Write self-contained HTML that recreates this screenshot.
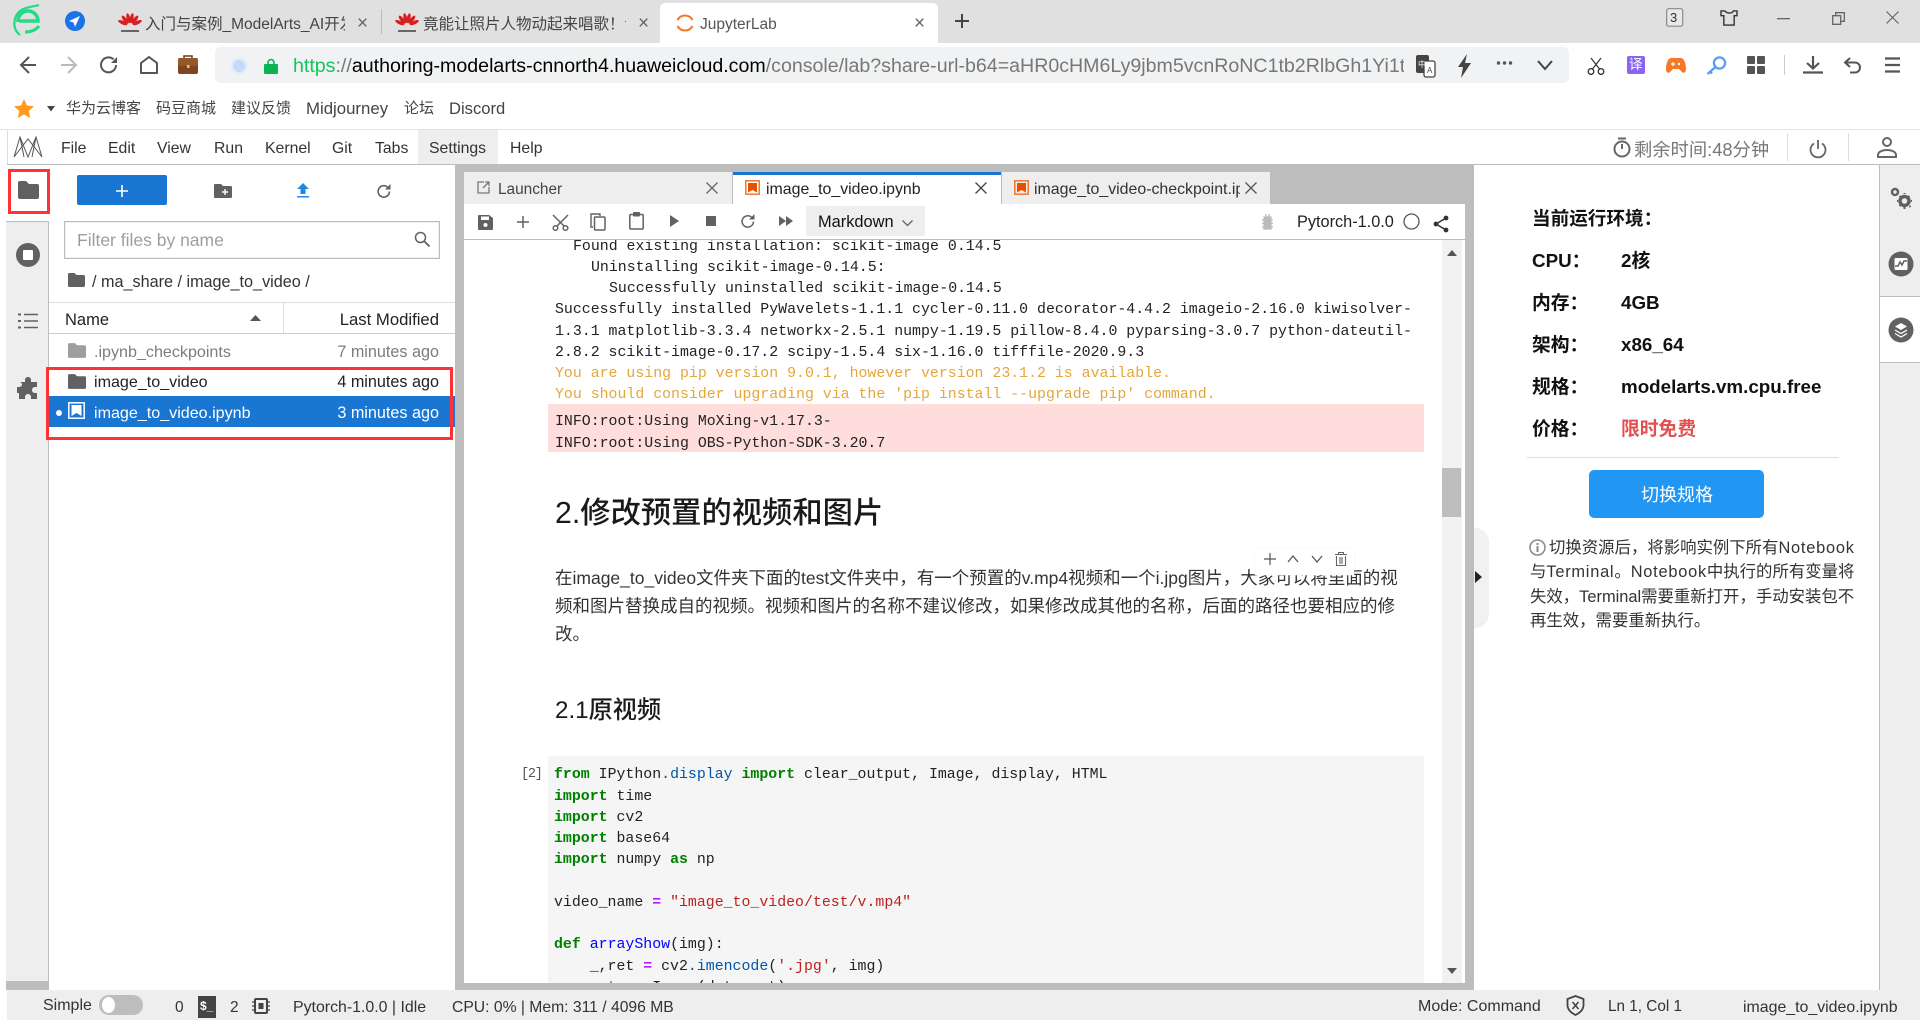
<!DOCTYPE html>
<html lang="zh"><head><meta charset="utf-8"><title>JupyterLab</title>
<style>
html,body{margin:0;padding:0;width:1920px;height:1020px;overflow:hidden;background:#fff}
body{position:relative;font-family:"Liberation Sans","Noto Sans CJK SC",sans-serif;color:#222}
.t{position:absolute;white-space:pre;line-height:24px;margin-top:-12px;font-size:16px}
.b{position:absolute}
svg{position:absolute;overflow:visible}
.m{font-family:"Liberation Mono","Noto Sans CJK SC",monospace;font-size:14.88px;color:#222}
.o{color:#e5a63a}
.k{color:#008000;font-weight:bold}.q{color:#ba2121}.p{color:#aa22ff;font-weight:bold}.f{color:#0000ff}.n{color:#0055aa}
.s{letter-spacing:.75px}
</style></head><body>

<!-- browser tab strip -->
<div class="b" style="left:0;top:0;width:1920px;height:43px;background:#e0e0e0"></div>
<div class="b" style="left:660px;top:3px;width:278px;height:40px;background:#fff;border-radius:5px 5px 0 0"></div>
<div class="b" style="left:381px;top:9px;width:1px;height:25px;background:#bbb"></div>
<svg style="left:14px;top:5px" width="28" height="31" viewBox="0 0 28 31"><path d="M4 17a10 10 0 0 1 20-2v1H5" fill="none" stroke="#1fdc85" stroke-width="3.500"/><path d="M25 21c-3 4-8 6-14 6" fill="none" stroke="#1fdc85" stroke-width="3"/><path d="M6 30C-2 24-1 12 6 6 11 2 18 2 25 0" fill="none" stroke="#1fdc85" stroke-width="2.200"/></svg>
<svg style="left:65px;top:11px" width="20" height="20" viewBox="0 0 20 20"><circle cx="10" cy="10" r="10" fill="#1a73e8"/><path d="M15 5L4 10l4.500 1.500L10 16z" fill="#fff"/></svg>
<svg style="left:120px;top:13px" width="20" height="20" viewBox="0 0 20 20"><g fill="#d81e20"><ellipse cx="10" cy="5" rx="1.800" ry="5" transform="rotate(-12 10 13)"/><ellipse cx="10" cy="5" rx="1.800" ry="5" transform="rotate(12 10 13)"/><ellipse cx="10" cy="5" rx="1.800" ry="5" transform="rotate(-38 10 13)"/><ellipse cx="10" cy="5" rx="1.800" ry="5" transform="rotate(38 10 13)"/><ellipse cx="10" cy="5" rx="1.800" ry="5" transform="rotate(-65 10 13)"/><ellipse cx="10" cy="5" rx="1.800" ry="5" transform="rotate(65 10 13)"/></g><rect x="1" y="17" width="18" height="2" fill="#666"/></svg>
<div class="t" style="left:145px;top:25px;font-size:15.500px;color:#444;width:200px;overflow:hidden;height:24px">入门与案例_ModelArts_AI开发</div>
<div class="t" style="left:357px;top:24px;font-size:19px;color:#666">×</div>
<svg style="left:397px;top:13px" width="20" height="20" viewBox="0 0 20 20"><g fill="#d81e20"><ellipse cx="10" cy="5" rx="1.800" ry="5" transform="rotate(-12 10 13)"/><ellipse cx="10" cy="5" rx="1.800" ry="5" transform="rotate(12 10 13)"/><ellipse cx="10" cy="5" rx="1.800" ry="5" transform="rotate(-38 10 13)"/><ellipse cx="10" cy="5" rx="1.800" ry="5" transform="rotate(38 10 13)"/><ellipse cx="10" cy="5" rx="1.800" ry="5" transform="rotate(-65 10 13)"/><ellipse cx="10" cy="5" rx="1.800" ry="5" transform="rotate(65 10 13)"/></g><rect x="1" y="17" width="18" height="2" fill="#666"/></svg>
<div class="t" style="left:423px;top:25px;font-size:15.500px;color:#444;width:203px;overflow:hidden;height:24px">竟能让照片人物动起来唱歌！说</div>
<div class="t" style="left:638px;top:24px;font-size:19px;color:#666">×</div>
<svg style="left:675px;top:13px" width="20" height="20" viewBox="0 0 20 20"><path d="M2.500 7a8.500 8.500 0 0 1 15 0M2.500 13a8.500 8.500 0 0 0 15 0" fill="none" stroke="#f37626" stroke-width="2"/></svg>
<div class="t" style="left:700px;top:25px;font-size:15.500px;color:#555">JupyterLab</div>
<div class="t" style="left:914px;top:24px;font-size:19px;color:#666">×</div>
<svg style="left:954px;top:13px" width="16" height="16" viewBox="0 0 16 16"><path d="M8 1v14M1 8h14" stroke="#444" stroke-width="2"/></svg>
<!-- window controls -->
<svg style="left:1666px;top:8px" width="18" height="19" viewBox="0 0 18 19"><rect x=".7" y=".7" width="16" height="17.500" rx="2" fill="#e8e8e8" stroke="#888" stroke-width="1.200"/></svg>
<div class="t" style="left:1670px;top:18px;font-size:13px;color:#333">3</div>
<svg style="left:1720px;top:10px" width="18" height="16" viewBox="0 0 19 17"><path d="M5 1H1L1 6h3v10h11V6h3V1h-4c-1 3-6 3-9 0z" fill="none" stroke="#333" stroke-width="1.500"/></svg>
<svg style="left:1777px;top:18px" width="13" height="2"><rect width="13" height="1.300" fill="#666"/></svg>
<svg style="left:1832px;top:12px" width="13" height="13" viewBox="0 0 13 13"><path d="M.7 3.700h8v8.600h-8zM3.700 3.700V.7h8.600v8.600H8.700" fill="none" stroke="#666" stroke-width="1.300"/></svg>
<svg style="left:1886px;top:11px" width="13" height="13" viewBox="0 0 13 13"><path d="M.5.5l12 12M12.500.5l-12 12" stroke="#666" stroke-width="1.200"/></svg>

<!-- nav row -->
<svg style="left:19px;top:55px" width="18" height="20" viewBox="0 0 18 20"><path d="M17 10H2M10 2l-8 8 8 8" fill="none" stroke="#555" stroke-width="2"/></svg>
<svg style="left:60px;top:55px" width="18" height="20" viewBox="0 0 18 20"><path d="M1 10h15M8 2l8 8-8 8" fill="none" stroke="#bbb" stroke-width="2"/></svg>
<svg style="left:100px;top:56px" width="18" height="18" viewBox="0 0 18 18"><path d="M16 9a7.500 7.500 0 1 1-2.500-5.700" fill="none" stroke="#555" stroke-width="2"/><path d="M17 1v6h-6z" fill="#555"/></svg>
<svg style="left:140px;top:56px" width="18" height="18" viewBox="0 0 18 18"><path d="M1 7l8-6 8 6v10H1z" fill="none" stroke="#555" stroke-width="2" stroke-linejoin="round"/></svg>
<svg style="left:178px;top:54px" width="20" height="20" viewBox="0 0 20 20"><path d="M6 4V2h8v2" fill="none" stroke="#6d3a1c" stroke-width="1.500"/><rect x="0" y="4" width="20" height="16" rx="2" fill="#7d4520"/><rect x="0" y="4" width="20" height="8" rx="2" fill="#95582c"/><rect x="9" y="11" width="2.500" height="3" fill="#e8c860"/></svg>
<div class="b" style="left:215px;top:47px;width:1354px;height:36px;background:#f1f2f3;border-radius:6px"></div>
<svg style="left:230px;top:57px" width="18" height="18" viewBox="0 0 18 18"><circle cx="9" cy="9" r="8.500" fill="#e3ecfa"/><circle cx="9" cy="9" r="6" fill="#c5daf8"/></svg>
<svg style="left:264px;top:58px" width="14" height="16" viewBox="0 0 14 16"><path d="M4 7V4.500a3 3 0 0 1 6 0V7" fill="none" stroke="#0bb353" stroke-width="1.600"/><rect y="6" width="14" height="10" rx="1" fill="#0bb353"/></svg>
<div style="position:absolute;left:293px;top:53px;width:1111px;height:26px;overflow:hidden;white-space:nowrap;font-size:19.600px;line-height:26px;color:#777"><span style="color:#11c75a">https</span>://<span style="color:#000">authoring-modelarts-cnnorth4.huaweicloud.com</span>/console/lab?share-url-b64=aHR0cHM6Ly9jbm5vcnRoNC1tb2RlbGh1Yi1tb2F</div>
<svg style="left:1415px;top:54px" width="21" height="24" viewBox="0 0 21 24"><rect x="1" y="1" width="13" height="18" rx="2" fill="#444"/><rect x="9" y="7" width="11" height="16" rx="2" fill="#fff" stroke="#444" stroke-width="1.300"/><text x="3" y="13" font-size="8" fill="#fff" font-family="Noto Sans CJK SC">中</text><text x="12" y="19" font-size="8" fill="#444">A</text></svg>
<svg style="left:1457px;top:54px" width="15" height="24" viewBox="0 0 15 24"><path d="M10 0L1 13h5l-2 11 10-15H8z" fill="#444"/></svg>
<svg style="left:1496px;top:60px" width="17" height="6"><circle cx="2.500" cy="3" r="1.700" fill="#555"/><circle cx="8.500" cy="3" r="1.700" fill="#555"/><circle cx="14.500" cy="3" r="1.700" fill="#555"/></svg>
<svg style="left:1537px;top:60px" width="16" height="11" viewBox="0 0 16 11"><path d="M1 1l7 8 7-8" fill="none" stroke="#444" stroke-width="2"/></svg>
<svg style="left:1587px;top:57px" width="18" height="18" viewBox="0 0 18 18"><path d="M4 1l8.500 11M14 1L5.500 12" stroke="#333" stroke-width="1.200"/><circle cx="4" cy="14.500" r="2.800" fill="none" stroke="#333" stroke-width="1.300"/><circle cx="14" cy="14.500" r="2.800" fill="none" stroke="#333" stroke-width="1.300"/></svg>
<div class="b" style="left:1627px;top:56px;width:18px;height:18px;background:#8b64f4;border-radius:2px"></div>
<div class="t" style="left:1629px;top:65px;font-size:13.500px;color:#fff">译</div>
<svg style="left:1666px;top:57px" width="20" height="17" viewBox="0 0 20 17"><path d="M5 1h10c3 0 5 6 5 11 0 4-3 5-5 2l-2-2H7l-2 2c-2 3-5 2-5-2C0 7 2 1 5 1z" fill="#f7782a"/><path d="M5 7h4M7 5v4" stroke="#fff" stroke-width="1.300"/><circle cx="13" cy="7" r="1.200" fill="#fff"/></svg>
<svg style="left:1706px;top:56px" width="21" height="19" viewBox="0 0 21 19"><circle cx="13.500" cy="7" r="5.600" fill="none" stroke="#5b9cf5" stroke-width="2.300"/><path d="M9.500 11L1.500 18M4 15.500l2 2" stroke="#5b9cf5" stroke-width="2.300" fill="none"/></svg>
<svg style="left:1747px;top:56px" width="18" height="18" viewBox="0 0 18 18"><rect width="8" height="8" rx="1" fill="#555"/><rect x="10" width="8" height="8" rx="1" fill="#555"/><rect y="10" width="8" height="8" rx="1" fill="#555"/><rect x="10" y="10" width="8" height="8" rx="1" fill="#555"/></svg>
<div class="b" style="left:1784px;top:55px;width:1px;height:20px;background:#ccc"></div>
<svg style="left:1803px;top:56px" width="20" height="18" viewBox="0 0 20 18"><path d="M10 0v12M4 7l6 5.500L16 7M0 16.500h20" fill="none" stroke="#555" stroke-width="2.200"/></svg>
<svg style="left:1844px;top:57px" width="18" height="17" viewBox="0 0 18 17"><path d="M6 1L1 5.500 6 10M1 5.500h10a5 5 0 0 1 0 10H6" fill="none" stroke="#555" stroke-width="2"/></svg>
<svg style="left:1885px;top:57px" width="15" height="16" viewBox="0 0 15 16"><path d="M0 1.500h15M0 8h15M0 14.500h15" stroke="#555" stroke-width="2.200"/></svg>

<!-- bookmarks -->
<svg style="left:14px;top:99px" width="20" height="19" viewBox="0 0 20 19"><path d="M10 0l3 6.500 7 .8-5.200 4.700 1.400 7L10 15.400 3.800 19l1.400-7L0 7.300l7-.8z" fill="#ff9a1f"/></svg>
<svg style="left:47px;top:106px" width="9" height="6"><path d="M0 0h8L4 5.500z" fill="#444"/></svg>
<div class="t" style="left:66px;top:109px;font-size:15px;color:#444">华为云博客</div>
<div class="t" style="left:156px;top:109px;font-size:15px;color:#444">码豆商城</div>
<div class="t" style="left:231px;top:109px;font-size:15px;color:#444">建议反馈</div>
<div class="t" style="left:306px;top:109px;font-size:16.800px;color:#444">Midjourney</div>
<div class="t" style="left:404px;top:109px;font-size:15px;color:#444">论坛</div>
<div class="t" style="left:449px;top:109px;font-size:16.600px;color:#444">Discord</div>
<div class="b" style="left:0;top:129px;width:1920px;height:1px;background:#e3e3e3"></div>

<!-- jupyter menu -->
<div class="b" style="left:7px;top:130px;width:1px;height:35px;background:#ddd"></div>
<svg style="left:13px;top:136px" width="30" height="22" viewBox="0 0 30 22"><path d="M1 21L7 1l8 20L23 1l6 20M1 21L15 3l14 18M7 1l4 20M23 1l-4 20" fill="none" stroke="#555" stroke-width="1"/></svg>
<div class="b" style="left:418px;top:130px;width:80px;height:34px;background:#eee"></div>
<div class="t" style="left:61px;top:149px;font-size:15.800px;color:#333">File</div>
<div class="t" style="left:108px;top:149px;font-size:15.800px;color:#333">Edit</div>
<div class="t" style="left:157px;top:149px;font-size:15.800px;color:#333">View</div>
<div class="t" style="left:214px;top:149px;font-size:15.800px;color:#333">Run</div>
<div class="t" style="left:265px;top:149px;font-size:15.800px;color:#333">Kernel</div>
<div class="t" style="left:332px;top:149px;font-size:15.800px;color:#333">Git</div>
<div class="t" style="left:375px;top:149px;font-size:15.800px;color:#333">Tabs</div>
<div class="t" style="left:429px;top:149px;font-size:15.800px;color:#333">Settings</div>
<div class="t" style="left:510px;top:149px;font-size:15.800px;color:#333">Help</div>
<svg style="left:1613px;top:137px" width="18" height="21" viewBox="0 0 18 21"><circle cx="9" cy="12" r="7.500" fill="none" stroke="#666" stroke-width="2"/><path d="M5 1.500h8M9 7v5" stroke="#666" stroke-width="2"/></svg>
<div class="t" style="left:1634px;top:150px;font-size:18.300px;color:#777">剩余时间:48分钟</div>
<div class="b" style="left:1787px;top:133px;width:1px;height:28px;background:#ddd"></div>
<div class="b" style="left:1848px;top:133px;width:1px;height:28px;background:#ddd"></div>
<svg style="left:1809px;top:140px" width="18" height="18" viewBox="0 0 18 18"><path d="M5 3.500a7.500 7.500 0 1 0 8 0M9 0v9" fill="none" stroke="#666" stroke-width="1.800"/></svg>
<svg style="left:1876px;top:137px" width="22" height="21" viewBox="0 0 22 21"><circle cx="11" cy="5" r="4" fill="none" stroke="#666" stroke-width="2"/><path d="M2 20v-2c0-3 4-5 9-5s9 2 9 5v2z" fill="none" stroke="#666" stroke-width="2"/></svg>
<div class="b" style="left:7px;top:164px;width:1913px;height:1px;background:#bdbdbd"></div>

<!-- left sidebar -->
<div class="b" style="left:6px;top:221px;width:42px;height:769px;background:#eee;border-right:1px solid #bdbdbd;border-top:1px solid #bdbdbd"></div>
<svg style="left:18px;top:181px" width="21" height="18" viewBox="0 0 21 18"><path d="M2 0h6l3 3h8a2 2 0 0 1 2 2v11a2 2 0 0 1-2 2H2a2 2 0 0 1-2-2V2a2 2 0 0 1 2-2z" fill="#616161"/></svg>
<svg style="left:16px;top:243px" width="24" height="24" viewBox="0 0 24 24"><circle cx="12" cy="12" r="12" fill="#616161"/><rect x="7" y="7" width="10" height="10" rx="1" fill="#fff"/></svg>
<svg style="left:18px;top:313px" width="20" height="16" viewBox="0 0 20 16"><path d="M6 1.500h14M6 8h14M6 14.500h14" stroke="#616161" stroke-width="1.500"/><path d="M0 1.500h3M0 8h3M0 14.500h3" stroke="#616161" stroke-width="2"/></svg>
<svg style="left:17px;top:377px" width="23" height="23" viewBox="0 0 23 23"><path d="M8 3c0-4 6-4 6 0v2h6v5h-2c-4 0-4 6 0 6h2v6h-6v-2c0-4-6-4-6 0v2H2v-6h-2c0 0 0 0 0 0v-6h2C6 10 6 5 2 5h6z" fill="#616161"/></svg>
<div class="b" style="left:8px;top:169px;width:36px;height:39px;border:3px solid #ff3333"></div>

<!-- file browser -->
<div class="b" style="left:77px;top:175px;width:90px;height:30px;background:#1976d2;border-radius:2px"></div>
<svg style="left:116px;top:185px" width="12" height="12"><path d="M6 0v12M0 6h12" stroke="#fff" stroke-width="1.600"/></svg>
<svg style="left:214px;top:184px" width="18" height="14" viewBox="0 0 18 14"><path d="M1 0h6l2 2h8a1 1 0 0 1 1 1v10a1 1 0 0 1-1 1H1a1 1 0 0 1-1-1V1a1 1 0 0 1 1-1z" fill="#616161"/><path d="M11 5v6M8 8h6" stroke="#fff" stroke-width="1.400"/></svg>
<svg style="left:297px;top:183px" width="12" height="15" viewBox="0 0 12 15"><path d="M6 0l6 6H8.500v5h-5V6H0z" fill="#1e88e5"/><rect y="13" width="12" height="1.500" fill="#1e88e5"/></svg>
<svg style="left:377px;top:184px" width="14" height="14" viewBox="0 0 14 14"><path d="M12.500 7.500a5.700 5.700 0 1 1-2-4.400" fill="none" stroke="#616161" stroke-width="1.600"/><path d="M13.500 0v5.500H8z" fill="#616161"/></svg>
<div class="b" style="left:64px;top:221px;width:374px;height:36px;border:1px solid #bdbdbd;box-shadow:inset 0 0 0 .5px #ddd"></div>
<div class="t" style="left:77px;top:240px;font-size:17.500px;color:#9e9e9e">Filter files by name</div>
<svg style="left:414px;top:231px" width="16" height="16" viewBox="0 0 16 16"><circle cx="6.500" cy="6.500" r="5" fill="none" stroke="#616161" stroke-width="1.500"/><path d="M10.500 10.500l5 5" stroke="#616161" stroke-width="1.800"/></svg>
<svg style="left:68px;top:273px" width="17" height="14" viewBox="0 0 17 14"><path d="M1.500 0h5l2 2h7A1.500 1.500 0 0 1 17 3.500v9a1.500 1.500 0 0 1-1.500 1.500h-14A1.500 1.500 0 0 1 0 12.500v-11A1.500 1.500 0 0 1 1.500 0z" fill="#616161"/></svg>
<div class="t" style="left:92px;top:282px;font-size:16.200px;color:#333">/ ma_share / image_to_video /</div>
<div class="b" style="left:49px;top:302px;width:406px;height:1px;background:#ddd"></div>
<div class="b" style="left:49px;top:333px;width:406px;height:1px;background:#ccc"></div>
<div class="b" style="left:283px;top:303px;width:1px;height:30px;background:#ddd"></div>
<div class="t" style="left:65px;top:320px;font-size:16.500px;color:#222">Name</div>
<svg style="left:250px;top:315px" width="11" height="6"><path d="M5.500 0L11 6H0z" fill="#555"/></svg>
<div class="t" style="right:1481px;top:320px;font-size:16.700px;color:#222">Last Modified</div>
<svg style="left:68px;top:343px" width="18" height="15" viewBox="0 0 17 14"><path d="M1.500 0h5l2 2h7A1.500 1.500 0 0 1 17 3.500v9a1.500 1.500 0 0 1-1.500 1.500h-14A1.500 1.500 0 0 1 0 12.500v-11A1.500 1.500 0 0 1 1.500 0z" fill="#9e9e9e"/></svg>
<div class="t" style="left:94px;top:352px;font-size:16.100px;color:#7d7d7d">.ipynb_checkpoints</div>
<div class="t" style="right:1481px;top:352px;font-size:16.200px;color:#7d7d7d">7 minutes ago</div>
<svg style="left:68px;top:374px" width="18" height="15" viewBox="0 0 17 14"><path d="M1.500 0h5l2 2h7A1.500 1.500 0 0 1 17 3.500v9a1.500 1.500 0 0 1-1.500 1.500h-14A1.500 1.500 0 0 1 0 12.500v-11A1.500 1.500 0 0 1 1.500 0z" fill="#616161"/></svg>
<div class="t" style="left:94px;top:382px;font-size:16.100px;color:#222">image_to_video</div>
<div class="t" style="right:1481px;top:382px;font-size:16.200px;color:#222">4 minutes ago</div>
<div class="b" style="left:49px;top:396px;width:406px;height:31px;background:#1976d2"></div>
<div class="b" style="left:56px;top:410px;width:6px;height:6px;border-radius:50%;background:#fff"></div>
<svg style="left:68px;top:402px" width="18" height="18" viewBox="0 0 18 18"><rect x=".8" y=".8" width="15.400" height="15.400" fill="none" stroke="#fff" stroke-width="1.500"/><path d="M3.500 3h10v11L8.500 11 3.500 14z" fill="#fff"/></svg>
<div class="t" style="left:94px;top:413px;font-size:16.100px;color:#fff">image_to_video.ipynb</div>
<div class="t" style="right:1481px;top:413px;font-size:16.200px;color:#fff">3 minutes ago</div>
<div class="b" style="left:46px;top:367px;width:401px;height:67px;border:3px solid #ff3333"></div>

<!-- splitters -->
<div class="b" style="left:455px;top:165px;width:9px;height:825px;background:#bdbdbd"></div>
<div class="b" style="left:6px;top:981px;width:43px;height:9px;background:#bdbdbd"></div>
<div class="b" style="left:464px;top:165px;width:1010px;height:39px;background:#bdbdbd"></div>
<div class="b" style="left:1465px;top:165px;width:9px;height:825px;background:#bdbdbd"></div>
<div class="b" style="left:464px;top:983px;width:1010px;height:7px;background:#bdbdbd"></div>

<!-- dock tabs -->
<div class="b" style="left:464px;top:172px;width:268px;height:32px;background:#eee;border-right:1px solid #bdbdbd"></div>
<div class="b" style="left:733px;top:172px;width:268px;height:33px;background:#fff;border-top:3px solid #1976d2;box-sizing:border-box"></div>
<div class="b" style="left:1001px;top:172px;width:269px;height:32px;background:#eee;border-left:1px solid #bdbdbd;box-sizing:border-box"></div>
<svg style="left:477px;top:181px" width="13" height="13" viewBox="0 0 13 13"><path d="M7 1H1v11h11V6M6 7l6-6M8 1h4v4" fill="none" stroke="#777" stroke-width="1.300"/></svg>
<div class="t" style="left:498px;top:190px;font-size:15.400px;color:#444">Launcher</div>
<svg style="left:706px;top:182px" width="12" height="12"><path d="M.5.5l11 11M11.500.5l-11 11" stroke="#666" stroke-width="1.300"/></svg>
<svg style="left:745px;top:180px" width="15" height="15" viewBox="0 0 15 15"><rect x=".8" y=".8" width="13.400" height="13.400" fill="none" stroke="#f4762a" stroke-width="1.500"/><path d="M3 3h9v9.500L7.500 10 3 12.500z" fill="#e65100"/></svg>
<div class="t" style="left:766px;top:190px;font-size:15.900px;color:#222">image_to_video.ipynb</div>
<svg style="left:975px;top:182px" width="12" height="12"><path d="M.5.5l11 11M11.500.5l-11 11" stroke="#444" stroke-width="1.300"/></svg>
<svg style="left:1014px;top:180px" width="15" height="15" viewBox="0 0 15 15"><rect x=".8" y=".8" width="13.400" height="13.400" fill="none" stroke="#f4762a" stroke-width="1.500"/><path d="M3 3h9v9.500L7.500 10 3 12.500z" fill="#e65100"/></svg>
<div class="t" style="left:1034px;top:190px;font-size:15.900px;color:#333;width:206px;overflow:hidden;height:24px">image_to_video-checkpoint.ipynb</div>
<svg style="left:1245px;top:182px" width="12" height="12"><path d="M.5.5l11 11M11.500.5l-11 11" stroke="#555" stroke-width="1.300"/></svg>

<!-- notebook toolbar -->
<svg style="left:478px;top:215px" width="15" height="15" viewBox="0 0 15 15"><path d="M1 0h10l4 3v11a1 1 0 0 1-1 1H1a1 1 0 0 1-1-1V1a1 1 0 0 1 1-1z" fill="#616161"/><rect x="3" y="1.500" width="8" height="3.500" fill="#fff"/><circle cx="7.500" cy="10" r="2" fill="#fff"/></svg>
<svg style="left:517px;top:216px" width="12" height="12"><path d="M6 0v12M0 6h12" stroke="#616161" stroke-width="1.500"/></svg>
<svg style="left:552px;top:214px" width="17" height="17" viewBox="0 0 17 17"><path d="M1 1l11 11M16 1L5 12" stroke="#616161" stroke-width="1.500"/><circle cx="3.500" cy="14" r="2.300" fill="none" stroke="#616161" stroke-width="1.500"/><circle cx="13.500" cy="14" r="2.300" fill="none" stroke="#616161" stroke-width="1.500"/></svg>
<svg style="left:590px;top:213px" width="16" height="18" viewBox="0 0 16 18"><path d="M3 14H1V1h9v2" fill="none" stroke="#616161" stroke-width="1.400"/><rect x="4.500" y="4" width="10.500" height="13" rx="1" fill="none" stroke="#616161" stroke-width="1.500"/></svg>
<svg style="left:629px;top:212px" width="15" height="18" viewBox="0 0 15 18"><rect x=".8" y="2.500" width="13.400" height="14.500" rx="1" fill="none" stroke="#616161" stroke-width="1.500"/><rect x="4" y="0" width="7" height="4.500" rx="1" fill="#616161"/></svg>
<svg style="left:670px;top:215px" width="9" height="12"><path d="M0 0l9 6-9 6z" fill="#616161"/></svg>
<div class="b" style="left:706px;top:216px;width:10px;height:10px;background:#616161"></div>
<svg style="left:741px;top:214px" width="14" height="14" viewBox="0 0 14 14"><path d="M12.500 7.500a5.700 5.700 0 1 1-2-4.400" fill="none" stroke="#616161" stroke-width="1.500"/><path d="M13.500 0v5.500H8z" fill="#616161"/></svg>
<svg style="left:779px;top:216px" width="14" height="10"><path d="M0 0l7 5-7 5zM7 0l7 5-7 5z" fill="#616161"/></svg>
<div class="b" style="left:806px;top:206px;width:119px;height:30px;background:#eee"></div>
<div class="t" style="left:818px;top:222px;font-size:16.400px;color:#111">Markdown</div>
<svg style="left:902px;top:220px" width="11" height="7"><path d="M.5.5L5.500 5.500 10.500.5" fill="none" stroke="#616161" stroke-width="1.300"/></svg>
<svg style="left:1262px;top:214px" width="11" height="16" viewBox="0 0 11 16"><path d="M2 3h7v12H2zM0 6h11M0 9.500h11M0 13h11M3.500 0l1 3M7.500 0l-1 3" fill="#bbb" stroke="#bbb" stroke-width="1.200"/></svg>
<div class="t" style="left:1297px;top:222px;font-size:16.300px;color:#222">Pytorch-1.0.0</div>
<svg style="left:1403px;top:213px" width="17" height="17"><circle cx="8.500" cy="8.500" r="7.500" fill="none" stroke="#555" stroke-width="1.300"/></svg>
<svg style="left:1433px;top:215px" width="16" height="18" viewBox="0 0 16 18"><path d="M13 3L3 9l10 6" fill="none" stroke="#333" stroke-width="1.500"/><circle cx="13" cy="3" r="2.400" fill="#333"/><circle cx="3" cy="9" r="2.400" fill="#333"/><circle cx="13" cy="15" r="2.400" fill="#333"/></svg>
<div class="b" style="left:464px;top:239px;width:1001px;height:1px;background:#bdbdbd"></div>

<!-- notebook content -->
<div class="b" style="left:464px;top:240px;width:1001px;height:743px;overflow:hidden" id="nb">
<div class="b" style="left:84px;top:164px;width:876px;height:48px;background:#ffdddd"></div>
<div class="t m" style="left:109px;top:5px;margin:-10px 0 0">Found existing installation: scikit-image 0.14.5</div>
<div class="t m" style="left:127px;top:26px;margin:-10px 0 0">Uninstalling scikit-image-0.14.5:</div>
<div class="t m" style="left:145px;top:47px;margin:-10px 0 0">Successfully uninstalled scikit-image-0.14.5</div>
<div class="t m" style="left:91px;top:68px;margin:-10px 0 0">Successfully installed PyWavelets-1.1.1 cycler-0.11.0 decorator-4.4.2 imageio-2.16.0 kiwisolver-</div>
<div class="t m" style="left:91px;top:90px;margin:-10px 0 0">1.3.1 matplotlib-3.3.4 networkx-2.5.1 numpy-1.19.5 pillow-8.4.0 pyparsing-3.0.7 python-dateutil-</div>
<div class="t m" style="left:91px;top:111px;margin:-10px 0 0">2.8.2 scikit-image-0.17.2 scipy-1.5.4 six-1.16.0 tifffile-2020.9.3</div>
<div class="t m o" style="left:91px;top:132px;margin:-10px 0 0">You are using pip version 9.0.1, however version 23.1.2 is available.</div>
<div class="t m o" style="left:91px;top:153px;margin:-10px 0 0">You should consider upgrading via the 'pip install --upgrade pip' command.</div>
<div class="t m" style="left:91px;top:180px;margin:-10px 0 0">INFO:root:Using MoXing-v1.17.3-</div>
<div class="t m" style="left:91px;top:202px;margin:-10px 0 0">INFO:root:Using OBS-Python-SDK-3.20.7</div>
<div class="t" style="left:91px;top:274px;font-size:30.300px;line-height:40px;margin-top:-20px;color:#1a1a1a;font-weight:500">2.修改预置的视频和图片</div>
<div class="t" style="left:91px;top:338px;font-size:17.500px;color:#333">在image_to_video文件夹下面的test文件夹中，有一个预置的v.mp4视频和一个i.jpg图片，大家可以将里面的视</div>
<div class="t" style="left:91px;top:366px;font-size:17.500px;color:#333">频和图片替换成自的视频。视频和图片的名称不建议修改，如果修改成其他的名称，后面的路径也要相应的修</div>
<div class="t" style="left:91px;top:394px;font-size:17.500px;color:#333">改。</div>
<div class="t" style="left:91px;top:471px;font-size:24.200px;line-height:36px;margin-top:-18px;color:#1a1a1a;font-weight:500">2.1原视频</div>
<div class="b" style="left:84px;top:516px;width:876px;height:227px;background:#f5f5f5"></div>
<div class="t m" style="left:57px;top:533px;margin:-10px 0 0;font-size:13.500px;letter-spacing:-1.200px;color:#555">[2]</div>
<div class="t m" style="left:90px;top:533px;margin:-10px 0 0"><span class="k">from</span> IPython<span class="n">.display</span> <span class="k">import</span> clear_output, Image, display, HTML</div>
<div class="t m" style="left:90px;top:555px;margin:-10px 0 0"><span class="k">import</span> time</div>
<div class="t m" style="left:90px;top:576px;margin:-10px 0 0"><span class="k">import</span> cv2</div>
<div class="t m" style="left:90px;top:597px;margin:-10px 0 0"><span class="k">import</span> base64</div>
<div class="t m" style="left:90px;top:618px;margin:-10px 0 0"><span class="k">import</span> numpy <span class="k">as</span> np</div>
<div class="t m" style="left:90px;top:661px;margin:-10px 0 0">video_name <span class="p">=</span> <span class="q">"image_to_video/test/v.mp4"</span></div>
<div class="t m" style="left:90px;top:703px;margin:-10px 0 0"><span class="k">def</span> <span class="f">arrayShow</span>(img):</div>
<div class="t m" style="left:90px;top:725px;margin:-10px 0 0">    _,ret <span class="p">=</span> cv2<span class="n">.imencode</span>(<span class="q">'.jpg'</span>, img)</div>
<div class="t m" style="left:90px;top:746px;margin:-10px 0 0">    <span style="color:#008000">return</span> Image(data=ret)</div>
<div class="b" style="left:978px;top:0;width:20px;height:743px;background:#f1f1f1"></div>
<svg style="left:983px;top:10px" width="10" height="6"><path d="M5 0l5 6H0z" fill="#555"/></svg>
<svg style="left:983px;top:728px" width="10" height="6"><path d="M5 6L0 0h10z" fill="#555"/></svg>
<div class="b" style="left:978px;top:228px;width:19px;height:49px;background:#bdbdbd"></div>
<div class="b" style="left:791px;top:309px;width:99px;height:26px;background:#fff;box-shadow:0 0 2px #eee"></div>
<svg style="left:799px;top:312px" width="84" height="14" viewBox="0 0 84 14"><path d="M7 1v12M1 7h12" stroke="#555" stroke-width="1.200"/><path d="M25 10l5-6 5 6M49 4l5 6 5-6" fill="none" stroke="#555" stroke-width="1.300"/><path d="M72 2.500h12M75.500 2.500v-2h5v2M73.500 4v9.500h9V4M77 5v7M79 5v7" fill="none" stroke="#666" stroke-width="1.100"/></svg>
</div>

<!-- right panel -->
<div class="b" style="left:1474px;top:528px;width:15px;height:100px;background:#f1f1f1;border-radius:0 14px 14px 0"></div>
<svg style="left:1475px;top:571px" width="7" height="12"><path d="M0 0l7 6-7 6z" fill="#222"/></svg>
<div class="t" style="left:1532px;top:219px;font-size:18.600px;font-weight:bold;color:#111">当前运行环境：</div>
<div class="t" style="left:1532px;top:261px;font-size:18.800px;font-weight:bold;color:#111">CPU：</div>
<div class="t" style="left:1621px;top:261px;font-size:18.800px;font-weight:bold;color:#111">2核</div>
<div class="t" style="left:1532px;top:303px;font-size:18.800px;font-weight:bold;color:#111">内存：</div>
<div class="t" style="left:1621px;top:303px;font-size:18.800px;font-weight:bold;color:#111">4GB</div>
<div class="t" style="left:1532px;top:345px;font-size:18.800px;font-weight:bold;color:#111">架构：</div>
<div class="t" style="left:1621px;top:345px;font-size:18.800px;font-weight:bold;color:#111">x86_64</div>
<div class="t" style="left:1532px;top:387px;font-size:18.800px;font-weight:bold;color:#111">规格：</div>
<div class="t" style="left:1621px;top:387px;font-size:18.800px;font-weight:bold;color:#111">modelarts.vm.cpu.free</div>
<div class="t" style="left:1532px;top:429px;font-size:18.800px;font-weight:bold;color:#111">价格：</div>
<div class="t" style="left:1621px;top:429px;font-size:18.800px;font-weight:bold;color:#e25050">限时免费</div>
<div class="b" style="left:1527px;top:457px;width:312px;height:1px;background:#ddd"></div>
<div class="b" style="left:1589px;top:470px;width:175px;height:48px;background:#2196f3;border-radius:5px"></div>
<div class="t" style="left:1641px;top:495px;font-size:18px;color:#fff">切换规格</div>
<svg style="left:1529px;top:539px" width="17" height="17" viewBox="0 0 17 17"><circle cx="8.500" cy="8.500" r="7.500" fill="none" stroke="#888" stroke-width="1.500"/><rect x="7.500" y="7" width="2" height="6" fill="#888"/><rect x="7.500" y="4" width="2" height="2" fill="#888"/></svg>
<div class="t" style="left:1549px;top:548px;font-size:16.400px;color:#333">切换资源后，将影响实例下所有<span class="s">Notebook</span></div>
<div class="t" style="left:1530px;top:572px;font-size:16.400px;color:#333">与<span class="s">Terminal</span>。<span class="s">Notebook</span>中执行的所有变量将</div>
<div class="t" style="left:1530px;top:597px;font-size:16.400px;color:#333">失效，Terminal需要重新打开，手动安装包不</div>
<div class="t" style="left:1530px;top:621px;font-size:16.400px;color:#333">再生效，需要重新执行。</div>

<!-- right sidebar -->
<div class="b" style="left:1879px;top:165px;width:41px;height:825px;background:#eee;border-left:1px solid #bdbdbd;box-sizing:border-box"></div>
<div class="b" style="left:1880px;top:296px;width:40px;height:67px;background:#fff;border-top:1px solid #bdbdbd;border-bottom:1px solid #bdbdbd;box-sizing:border-box"></div>
<svg style="left:1890px;top:187px" width="22" height="22" viewBox="0 0 22 22"><circle cx="5" cy="5" r="3" fill="none" stroke="#616161" stroke-width="2.500"/><circle cx="14.500" cy="14" r="4.500" fill="none" stroke="#616161" stroke-width="3.500"/><path d="M14.500 7v-1M14.500 22v-2M7 14h1M21 14h1M9.500 9l1 1M19.500 19l1 1M19.500 9l-1 1M9.500 19l1-1" stroke="#616161" stroke-width="2"/></svg>
<svg style="left:1888px;top:251px" width="26" height="26" viewBox="0 0 26 26"><circle cx="13" cy="13" r="12.500" fill="#616161"/><rect x="6.500" y="7" width="13" height="12" rx="1" fill="#fff"/><path d="M7 15h3l2-4 2 3 2-4h3" fill="none" stroke="#616161" stroke-width="1.500"/></svg>
<svg style="left:1888px;top:317px" width="26" height="26" viewBox="0 0 26 26"><circle cx="13" cy="13" r="12.500" fill="#616161"/><path d="M13 6l6 3.500-6 3.500-6-3.500z" fill="#fff"/><path d="M7 13l6 3.500 6-3.500M7 16.500l6 3.500 6-3.500" fill="none" stroke="#fff" stroke-width="1.300"/></svg>

<!-- status bar -->
<div class="b" style="left:7px;top:990px;width:1913px;height:30px;background:#eee"></div>
<div class="t" style="left:43px;top:1006px;font-size:16px;color:#333">Simple</div>
<div class="b" style="left:99px;top:995px;width:44px;height:20px;border-radius:10px;background:#bdbdbd"></div>
<div class="b" style="left:102px;top:997px;width:13px;height:16px;border-radius:50%;background:#fff"></div>
<div class="t" style="left:175px;top:1008px;font-size:15.500px;color:#333">0</div>
<div class="b" style="left:198px;top:996px;width:18px;height:22px;background:#444"></div>
<div class="t" style="left:200px;top:1006px;font-size:12px;font-weight:bold;color:#fff">$_</div>
<div class="t" style="left:230px;top:1008px;font-size:15.500px;color:#333">2</div>
<svg style="left:252px;top:997px" width="18" height="18" viewBox="0 0 18 18"><rect x="3" y="2" width="12" height="14" rx="1" fill="none" stroke="#444" stroke-width="2"/><rect x="6.500" y="6" width="5" height="6" fill="#444"/><path d="M0 5h3M0 9h3M0 13h3M15 5h3M15 9h3M15 13h3" stroke="#444" stroke-width="1.300"/></svg>
<div class="t" style="left:293px;top:1008px;font-size:15.900px;color:#333">Pytorch-1.0.0 | Idle</div>
<div class="t" style="left:452px;top:1008px;font-size:15.700px;color:#333">CPU: 0% | Mem: 311 / 4096 MB</div>
<div class="t" style="left:1418px;top:1007px;font-size:16px;color:#333">Mode: Command</div>
<svg style="left:1566px;top:995px" width="19" height="21" viewBox="0 0 19 21"><path d="M9.500 1l8 3v6c0 5-4 8-8 10-4-2-8-5-8-10V4z" fill="none" stroke="#444" stroke-width="1.800"/><path d="M6.500 7l6 7M12.500 7l-6 7" stroke="#444" stroke-width="1.600"/></svg>
<div class="t" style="left:1608px;top:1007px;font-size:15.300px;color:#333">Ln 1, Col 1</div>
<div class="t" style="left:1743px;top:1008px;font-size:15.900px;color:#333">image_to_video.ipynb</div>
<div class="b" style="left:0;top:990px;width:7px;height:30px;background:#fff"></div>
</body></html>
